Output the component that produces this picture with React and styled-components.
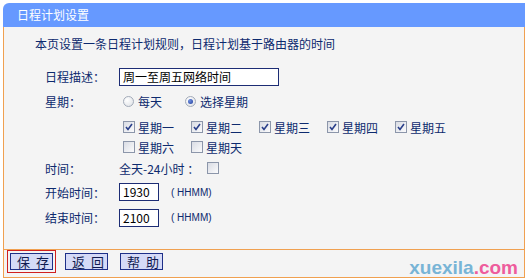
import React from "react";
import styled, { createGlobalStyle } from "styled-components";

const GlobalStyle = createGlobalStyle`
  body {
    margin: 0;
    background: #ffffff;
    font-family: "Noto Sans CJK SC", "Liberation Sans", sans-serif;
    font-size: 12px;
  }
`;

const Page = styled.div`
  padding: 3px 0 0 3px;
`;

const Panel = styled.div`
  position: relative;
  width: 522px;
`;

const Header = styled.div`
  height: 24px;
  line-height: 24px;
  background: #6699ff;
  border-top-left-radius: 6px;
  color: #ffffff;
  padding-left: 14px;
  font-size: 12px;
`;

const Body = styled.div`
  height: 222px;
  box-sizing: border-box;
  background: #f4f4f4;
  border-left: 1px solid #f0a050;
  border-right: 1px solid #f0a050;
  padding: 7px 0 0 31px;
  color: #0d2a6e;
`;

const Intro = styled.div`
  height: 20px;
  line-height: 20px;
`;

const Form = styled.div`
  margin-top: 10px;
  padding-left: 10px;
`;

const Row = styled.div`
  display: grid;
  grid-template-columns: 74px 1fr;
  align-items: center;
  height: ${(p) => p.$h || 25}px;
`;

const Label = styled.div`
  white-space: nowrap;
`;

const Controls = styled.div`
  display: flex;
  align-items: center;
  white-space: nowrap;
`;

const TextInput = styled.div`
  width: ${(p) => p.$w}px;
  height: 18px;
  box-sizing: border-box;
  border: 1px solid #1c2c74;
  background: #ffffff;
  color: #000000;
  padding-left: 3px;
  line-height: 16px;
  font-size: 12px;
`;

const Hint = styled.span`
  margin-left: 12px;
  font-family: "Liberation Sans", sans-serif;
  font-size: 10px;
  color: #0d2a6e;
`;

const RadioItem = styled.label`
  display: flex;
  align-items: center;
  gap: 4px;
  white-space: nowrap;
  width: ${(p) => (p.$w ? `${p.$w}px` : "auto")};
`;

const RadioDot = styled.span`
  width: 11px;
  height: 11px;
  box-sizing: border-box;
  border-radius: 50%;
  border: 1px solid #a3abb9;
  background: radial-gradient(circle at 35% 35%, #ffffff, #dcdfe4);
  display: flex;
  align-items: center;
  justify-content: center;
  margin-left: 4px;
  flex: none;

  &::after {
    content: "";
    width: 5px;
    height: 5px;
    border-radius: 50%;
    background: ${(p) => (p.$on ? "radial-gradient(circle at 35% 35%, #6f8fe0, #1f3d9a)" : "transparent")};
  }
`;

const CheckGrid = styled.div`
  padding: 3px 0 0 74px;
  display: grid;
  grid-template-columns: repeat(5, 68px);
  grid-auto-rows: 20px;
  align-items: center;
`;

const CheckItem = styled.label`
  display: flex;
  align-items: center;
  gap: 3px;
  white-space: nowrap;
`;

const Box = styled.span`
  width: 12px;
  height: 12px;
  box-sizing: border-box;
  border: 1px solid #8c96aa;
  background: linear-gradient(135deg, #d9dce4, #fbfbfc);
  margin-left: ${(p) => p.$ml ?? 4}px;
  display: flex;
  align-items: center;
  justify-content: center;
  flex: none;
`;

const Check = ({ on, ml }) => (
  <Box $ml={ml}>
    {on && (
      <svg width="8" height="8" viewBox="0 0 8 8">
        <path d="M1 4 L3 6.5 L7 1" fill="none" stroke="#2a3f8a" strokeWidth="1.6" />
      </svg>
    )}
  </Box>
);

const Footer = styled.div`
  height: 24px;
  background: #f4f4f4;
  border: 1px solid #f0a050;
  display: flex;
  align-items: flex-start;
  gap: 12px;
  padding: 3px 0 0 6px;
  box-sizing: content-box;
`;

const Button = styled.div`
  width: 43px;
  height: 17px;
  box-sizing: border-box;
  border: 1px solid #1e2f88;
  background: #d5daf7;
  color: #101a50;
  font-size: 13px;
  line-height: 15px;
  letter-spacing: 6px;
  text-indent: 6px;
  text-align: center;
  white-space: nowrap;
  ${(p) => p.$focus && "outline: 1px solid #d02020; outline-offset: 2px;"}
`;

const Watermark = styled.div`
  position: absolute;
  right: 7px;
  bottom: 1px;
  font-family: "Liberation Sans", sans-serif;
  font-weight: bold;
  font-size: 19px;
  line-height: 19px;
  color: #78b4d6;

  span {
    color: #ee5c9c;
  }
`;

const days = ["星期一", "星期二", "星期三", "星期四", "星期五", "星期六", "星期天"];

export default function App() {
  return (
    <Page>
      <GlobalStyle />
      <Panel>
        <Header>日程计划设置</Header>
        <Body>
          <Intro>本页设置一条日程计划规则，日程计划基于路由器的时间</Intro>
          <Form>
            <Row>
              <Label>日程描述：</Label>
              <Controls>
                <TextInput $w={160}>周一至周五网络时间</TextInput>
              </Controls>
            </Row>
            <Row>
              <Label>星期：</Label>
              <Controls>
                <RadioItem $w={62}>
                  <RadioDot />
                  每天
                </RadioItem>
                <RadioItem>
                  <RadioDot $on />
                  选择星期
                </RadioItem>
              </Controls>
            </Row>
            <CheckGrid>
              {days.map((d, i) => (
                <CheckItem key={d}>
                  <Check on={i < 5} />
                  {d}
                </CheckItem>
              ))}
            </CheckGrid>
            <Row $h={22}>
              <Label>时间：</Label>
              <Controls>
                全天-24小时 ：
                <Check ml={8} />
              </Controls>
            </Row>
            <Row $h={26}>
              <Label>开始时间：</Label>
              <Controls>
                <TextInput $w={40}>1930</TextInput>
                <Hint>( HHMM)</Hint>
              </Controls>
            </Row>
            <Row>
              <Label>结束时间：</Label>
              <Controls>
                <TextInput $w={40}>2100</TextInput>
                <Hint>( HHMM)</Hint>
              </Controls>
            </Row>
          </Form>
        </Body>
        <Footer>
          <Button $focus>保存</Button>
          <Button>返回</Button>
          <Button>帮助</Button>
        </Footer>
        <Watermark>
          xuexila<span>.com</span>
        </Watermark>
      </Panel>
    </Page>
  );
}
